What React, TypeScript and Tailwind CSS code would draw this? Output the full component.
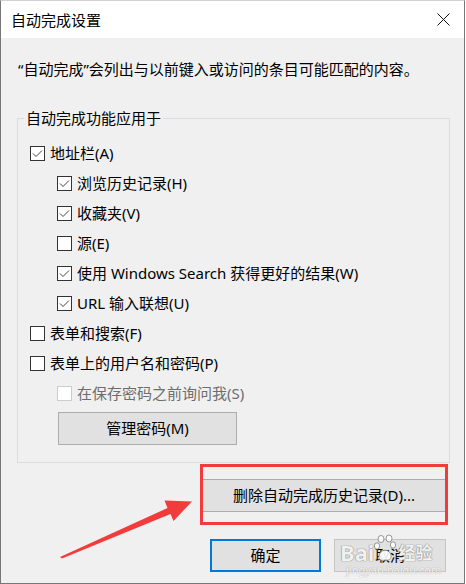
import React from "react";

const font = { fontFamily: '"Noto Sans", "Noto Sans CJK SC", sans-serif' };

function Box({ checked, disabled }: { checked?: boolean; disabled?: boolean }) {
  return (
    <span
      className={
        "w-[15px] h-[15px] shrink-0 border bg-white flex items-center justify-center " +
        (disabled ? "border-[#cccccc]" : "border-[#333333]")
      }
    >
      {checked && (
        <svg width="13" height="13" viewBox="0 0 13 13">
          <path d="M2 6.5 L5 9.5 L11 3.5" fill="none" stroke="#444" strokeWidth="1" />
        </svg>
      )}
    </span>
  );
}

function Row({
  label,
  checked,
  indent,
  disabled,
}: {
  label: string;
  checked?: boolean;
  indent?: boolean;
  disabled?: boolean;
}) {
  return (
    <div className={"h-[30px] flex items-center gap-[5px] " + (indent ? "pl-[39px]" : "pl-[12px]")}>
      <Box checked={checked} disabled={disabled} />
      <span className={"text-[15px] leading-[20px] " + (disabled ? "text-[#6d6d6d]" : "text-black")}>{label}</span>
    </div>
  );
}

export default function App() {
  return (
    <div className="w-[466px] h-[584px] bg-white relative" style={font}>
      <div className="w-[465px] h-[584px] border-l border-r border-b border-t border-t-[#d0d0d0] border-[#777777] flex flex-col">
        <div className="h-[37px] bg-white flex items-center justify-between pl-[10px] pr-[14px]">
          <span className="text-[15px] leading-[20px] text-black">自动完成设置</span>
          <svg width="13" height="13" viewBox="0 0 13 13">
            <path d="M0.5 0.5 L12.5 12.5 M12.5 0.5 L0.5 12.5" stroke="#111" strokeWidth="1" />
          </svg>
        </div>
        <div className="flex-1 bg-[#f0f0f0] flex flex-col">
          <p className="mt-[21px] pl-[17px] text-[15px] leading-[20px] text-black">
            “自动完成”会列出与以前键入或访问的条目可能匹配的内容。
          </p>
          <div className="mt-[39px] ml-[16px] w-[433px] h-[345px] border border-[#dcdcdc] relative">
            <span className="absolute left-[6px] top-[-11px] px-[2px] bg-[#f0f0f0] text-[15px] leading-[20px] text-black">
              自动完成功能应用于
            </span>
            <div className="pt-[19px] flex flex-col">
              <Row label="地址栏(A)" checked />
              <Row label="浏览历史记录(H)" checked indent />
              <Row label="收藏夹(V)" checked indent />
              <Row label="源(E)" indent />
              <Row label="使用 Windows Search 获得更好的结果(W)" checked indent />
              <Row label="URL 输入联想(U)" checked indent />
              <Row label="表单和搜索(F)" />
              <Row label="表单上的用户名和密码(P)" />
              <Row label="在保存密码之前询问我(S)" indent disabled />
              <button className="mt-[4px] ml-[40px] w-[179px] h-[33px] bg-[#e1e1e1] border border-[#adadad] text-[15px] text-black">
                管理密码(M)
              </button>
            </div>
          </div>
          <div className="flex justify-end pr-[18px] mt-[16px]">
            <button className="w-[244px] h-[33px] bg-[#e1e1e1] border border-[#adadad] text-[15px] text-black">
              删除自动完成历史记录(D)...
            </button>
          </div>
          <div className="flex justify-end gap-[13px] pr-[18px] mt-[27px]">
            <button className="w-[111px] h-[33px] bg-[#e1e1e1] border-2 border-[#0078d7] text-[15px] text-black">
              确定
            </button>
            <button className="w-[112px] h-[33px] bg-[#e1e1e1] border border-[#c4c4c4] text-[15px] text-black">
              取消
            </button>
          </div>
        </div>
      </div>

      {/* red annotation box */}
      <div className="absolute left-[200px] top-[464px] w-[248px] h-[61px] border-[3px] border-[#f23c3c]" />

      {/* red arrow */}
      <svg className="absolute left-0 top-0" width="466" height="584" viewBox="0 0 466 584">
        <polygon
          points="60,557 167.5,508 164.5,500.5 192,501.5 173.5,521 170.5,514 62,558.5"
          fill="#f23c3c"
        />
      </svg>

      {/* watermark */}
      <div className="absolute left-[340px] top-[526px] w-[100px] h-[50px] pointer-events-none">
        <div className="flex items-end">
          <span className="text-[22px] leading-[24px] font-bold text-white/90 mt-[14px] [text-shadow:0_0_1px_#777,0_0_1px_#777]">
            Bai
          </span>
          <svg width="24" height="32" viewBox="0 0 24 32" className="-mb-[2px]">
            <g fill="rgba(255,255,255,0.9)" stroke="#8a8a8a" strokeWidth="0.9">
              <ellipse cx="7" cy="5" rx="3" ry="3.5" />
              <ellipse cx="15" cy="4.5" rx="3" ry="3.5" />
              <ellipse cx="3" cy="12" rx="2.6" ry="3.2" />
              <ellipse cx="19" cy="11" rx="2.6" ry="3.2" />
              <path d="M5 22 C6 15 15 14 17 21 C18 25 14 27 11 26 C8 27 4 26 5 22 Z" />
            </g>
          </svg>
          <span className="text-[17px] leading-[22px] font-bold text-white/90 [text-shadow:0_0_1px_#777,0_0_1px_#777]">
            经验
          </span>
        </div>
        <div className="text-[11px] leading-[12px] text-white/90 pl-[6px] [text-shadow:0_0_1px_#888]">
          jingyan.baidu.com
        </div>
      </div>
    </div>
  );
}
